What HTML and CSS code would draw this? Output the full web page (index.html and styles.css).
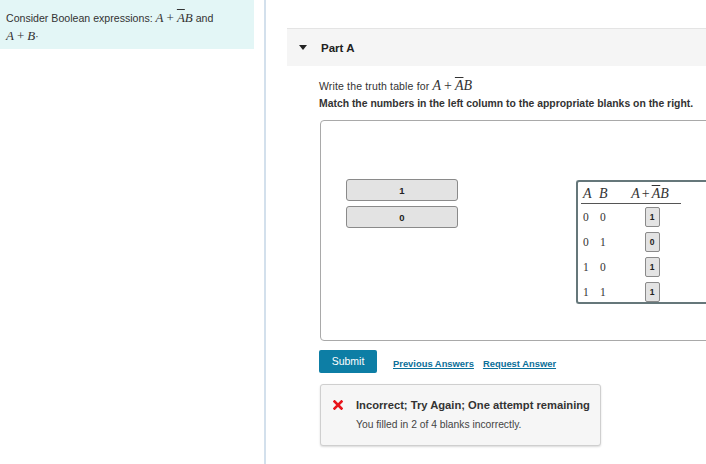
FILE: index.html
```html
<!DOCTYPE html>
<html>
<head>
<meta charset="utf-8">
<link rel="stylesheet" href="styles.css">
</head>
<body>
<div class="page">
  <div class="left">
    <div class="intro">Consider Boolean expressions: <span class="m">A</span><span class="op">+</span><span class="m ov">A</span><span class="m">B</span> and<br><span class="m">A</span><span class="op">+</span><span class="m">B</span><span class="dot">·</span></div>
  </div>
  <div class="main">
    <div class="part-head"><span class="tri"></span><span class="part-title">Part A</span></div>
    <div class="content">
      <p class="q">Write the truth table for <span class="m big">A</span><span class="op big">+</span><span class="m big ov">A</span><span class="m big">B</span></p>
      <p class="instr">Match the numbers in the left column to the appropriate blanks on the right.</p>
      <div class="dnd">
        <div class="tiles">
          <div class="tile">1</div>
          <div class="tile">0</div>
        </div>
        <div class="tbox">
          <div class="trow thead"><span class="c1 m">A</span><span class="c2 m">B</span><span class="c3"><span class="m">A</span><span class="op">+</span><span class="m ov">A</span><span class="m">B</span></span></div>
          <div class="trow first"><span class="c1">0</span><span class="c2">0</span><span class="c3"><span class="blank">1</span></span></div>
          <div class="trow"><span class="c1">0</span><span class="c2">1</span><span class="c3"><span class="blank">0</span></span></div>
          <div class="trow"><span class="c1">1</span><span class="c2">0</span><span class="c3"><span class="blank">1</span></span></div>
          <div class="trow"><span class="c1">1</span><span class="c2">1</span><span class="c3"><span class="blank">1</span></span></div>
        </div>
      </div>
      <div class="actions">
        <button class="submit">Submit</button>
        <a class="link">Previous Answers</a>
        <a class="link">Request Answer</a>
      </div>
      <div class="feedback">
        <div class="fb-title"><svg class="x" viewBox="0 0 10 10" width="10" height="10"><path d="M1.5 1.5 L8.5 8.5 M8.5 1.5 L1.5 8.5" stroke="#e8141b" stroke-width="2.6" stroke-linecap="square"/></svg><span>Incorrect; Try Again; One attempt remaining</span></div>
        <div class="fb-text">You filled in 2 of 4 blanks incorrectly.</div>
      </div>
    </div>
  </div>
</div>
</body>
</html>
```
FILE: styles.css
```css
* { box-sizing: border-box; }
html, body { margin: 0; padding: 0; }
body {
  width: 706px; height: 464px; overflow: hidden;
  background: #fff;
  font-family: "Liberation Sans", Arial, sans-serif;
  color: #222;
}
.page { display: flex; height: 464px; overflow: hidden; }
.left {
  width: 266px; flex: none;
  border-right: 2px solid #d3e0ec;
}
.intro {
  width: 254px; height: 49px;
  background: #e3f6f6;
  padding: 9px 6px 0 6px;
  font-size: 10.6px; line-height: 18px;
  color: #333;
}
.m { font-family: "Liberation Serif", "Times New Roman", serif; font-style: italic; font-size: 13px; }
.op { font-family: "Liberation Serif", serif; font-size: 13px; margin: 0 3px; }
.ov { text-decoration: overline; }
.dot { font-size: 10px; }
.big { font-size: 14px; }
.main { flex: 1; min-width: 0; padding-left: 21px; padding-top: 28px; overflow: hidden; }
.part-head {
  height: 38px;
  background: #f5f5f5;
  border-top: 1px solid #e4e4e4;
  display: flex; align-items: center;
  padding-left: 12px;
  width: 460px;
}
.tri {
  width: 0; height: 0;
  border-left: 4px solid transparent;
  border-right: 4px solid transparent;
  border-top: 5px solid #222;
  margin-right: 14px;
}
.part-title { font-size: 11.5px; font-weight: bold; color: #222; }
.content { padding-left: 32px; width: 480px; }
.q { margin: 12px 0 0 0; font-size: 10.5px; letter-spacing: 0.15px; line-height: 16px; color: #333; }
.q .m, .q .op { letter-spacing: 0; }
.instr { margin: 3px 0 0 0; font-size: 10.4px; font-weight: bold; color: #333; line-height: 14px; white-space: nowrap; }
.dnd {
  margin-top: 9px; margin-left: 1px;
  width: 430px; height: 221px;
  border: 1px solid #a9a9a9; border-radius: 4px;
  display: flex;
  padding-top: 58px; padding-left: 25px;
}
.tiles { width: 112px; display: flex; flex-direction: column; gap: 5px; }
.tile {
  height: 22px;
  background: #e3e3e3;
  border: 1px solid #8a8a8a; border-radius: 3px;
  font-size: 9.5px; font-weight: bold;
  display: flex; align-items: center; justify-content: center;
  color: #222;
}
.tbox {
  margin-left: 118px; margin-top: 1px;
  width: 160px; height: 124px;
  border: 2px solid #65777a; border-right: none;
  border-radius: 3px 0 0 3px;
  padding: 2px 0 0 3px;
  display: flex; flex-direction: column;
}
.trow {
  display: flex; align-items: center;
  height: 25px; flex: none;
  font-family: "Liberation Serif", serif; font-size: 11.5px; color: #333;
}
.thead {
  height: 20px; width: 100px;
  border-bottom: 1px solid #555;
}
.trow.first { height: 25px; }
.thead .m, .thead .op { font-size: 14px; }
.thead .op { margin: 0 2px; }
.thead .c2 { margin-left: -1px; width: 20px; }
.c1 { width: 19px; padding-left: 2px; }
.c2 { width: 19px; }
.c3 { display: flex; align-items: center; justify-content: center; width: 62px; flex: none; }
.blank {
  width: 15px; height: 20px; flex: none;
  background: #e3e3e3; border: 1px solid #8a8a8a; border-radius: 2px;
  font-family: "Liberation Sans", sans-serif; font-weight: bold; font-size: 8.5px;
  display: flex; align-items: center; justify-content: center;
  color: #222;
  margin-left: 4px;
}
.actions { display: flex; align-items: center; margin-top: 9px; }
.submit {
  width: 58px; height: 23px;
  background: #0d7ea5; color: #fff;
  border: none; border-radius: 2px;
  font-family: "Liberation Sans", sans-serif; font-size: 10.5px;
  padding: 0 0 2px 0;
}
.link {
  color: #0b6f99; font-weight: bold; font-size: 9.4px;
  text-decoration: underline; margin-left: 16px;
  padding-top: 3px;
}
.link + .link { margin-left: 9px; }
.feedback {
  margin-top: 11px; margin-left: 1px;
  width: 281px; height: 62px;
  background: #f6f6f6;
  border: 1px solid #cfcfcf; border-radius: 3px;
  box-shadow: 0 1px 2px rgba(0,0,0,0.15);
  padding: 14px 0 0 12px;
}
.fb-title { display: flex; align-items: center; font-size: 11.2px; font-weight: bold; color: #333; white-space: nowrap; }
.x { margin-right: 13px; }
.fb-text { font-size: 10.3px; color: #444; margin-top: 8px; margin-left: 23px; white-space: nowrap; }
```
